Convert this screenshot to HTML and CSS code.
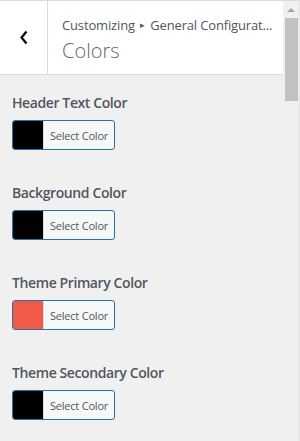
FILE: index.html
```
<!DOCTYPE html>
<html lang="en">
<head>
    <meta charset="UTF-8">
    <meta name="viewport" content="width=device-width, initial-scale=1.0">
    <title>Customizing Colors</title>

    <link rel="stylesheet" href="styles.css">
</head>
<body>
    <div class="panel">
        <div class="main">
            <div class="section-head">
                <button class="back-button" aria-label="Back">
                    <svg width="10" height="15" viewBox="0 0 10 15"><path d="M7.5 1.5 L2.5 7.5 L7.5 13.5" fill="none" stroke="#000" stroke-width="2.2"/></svg>
                </button>
                <div class="titles">
                    <span class="crumb">Customizing <span class="arrow">&#9656;</span> General Configurat...</span>
                    <h2 class="section-title">Colors</h2>
                </div>
            </div>

            <ul class="controls">
                <li class="control">
                    <span class="control-label">Header Text Color</span>
                    <button class="color-button"><span class="swatch" style="background-color: #000000"></span><span class="button-text">Select Color</span></button>
                </li>
                <li class="control">
                    <span class="control-label">Background Color</span>
                    <button class="color-button"><span class="swatch" style="background-color: #000000"></span><span class="button-text">Select Color</span></button>
                </li>
                <li class="control">
                    <span class="control-label">Theme Primary Color</span>
                    <button class="color-button"><span class="swatch" style="background-color: #f15a47"></span><span class="button-text">Select Color</span></button>
                </li>
                <li class="control">
                    <span class="control-label">Theme Secondary Color</span>
                    <button class="color-button"><span class="swatch" style="background-color: #000000"></span><span class="button-text">Select Color</span></button>
                </li>
            </ul>
        </div>

        <div class="scrollbar">
            <div class="scroll-arrow"></div>
            <div class="scroll-thumb"></div>
        </div>
    </div>
</body>
</html>
```

FILE: styles.css
```
body{
    margin: 0;
    background-color: #f0f0f0;
    font-family: "Open Sans", Arial, sans-serif;
    color: #50575e;
    overflow: hidden;
}
.panel{
    display: flex;
    height: 441px;
    border-top: 1px solid #dcdcde;
    box-sizing: border-box;
}
.main{
    width: 283px;
    flex: none;
}
.section-head{
    display: flex;
    height: 73px;
    background: #fff;
    border-bottom: 1px solid #dcdcde;
}
.back-button{
    width: 48px;
    flex: none;
    border: none;
    border-right: 1px solid #dcdcde;
    background: transparent;
    padding: 0;
    display: flex;
    align-items: center;
    justify-content: center;
    cursor: pointer;
}
.titles{
    min-width: 0;
    padding: 14px 8px 0 14px;
    display: flex;
    flex-direction: column;
}
.crumb{
    font-size: 13px;
    line-height: 20px;
    letter-spacing: -0.15px;
    color: #50575e;
    white-space: nowrap;
}
.arrow{
    font-size: 9px;
    vertical-align: 2px;
    margin: 0 2px;
}
.section-title{
    margin: 2px 0 0;
    font-size: 20px;
    font-weight: 300;
    line-height: 28px;
    color: #646970;
}
.controls{
    list-style: none;
    margin: 0;
    padding: 18px 12px 0;
}
.control{
    display: flex;
    flex-direction: column;
    align-items: flex-start;
    height: 90px;
}
.control-label{
    font-size: 14px;
    font-weight: 600;
    line-height: 20px;
    letter-spacing: -0.4px;
    color: #50575e;
    margin-bottom: 7px;
}
.color-button{
    display: flex;
    width: 103px;
    height: 30px;
    padding: 0;
    border: 1px solid #2271b1;
    border-radius: 3px;
    background: #f6f7f7;
    overflow: hidden;
    cursor: pointer;
    font-family: inherit;
}
.swatch{
    width: 30px;
    height: 100%;
    border-right: 1px solid #dcdcde;
}
.button-text{
    flex: 1;
    align-self: center;
    font-size: 11px;
    letter-spacing: -0.2px;
    color: #50575e;
    text-align: center;
}
.scrollbar{
    width: 17px;
    flex: none;
    background: #f0f0f0;
    border-right: 1px solid #e2e2e2;
    box-sizing: border-box;
    display: flex;
    flex-direction: column;
    align-items: center;
}
.scroll-arrow{
    margin-top: 7px;
    width: 0;
    height: 0;
    border-left: 4px solid transparent;
    border-right: 4px solid transparent;
    border-bottom: 4px solid #a3a3a3;
}
.scroll-thumb{
    margin-top: 6px;
    width: 13px;
    height: 83px;
    background: #c1c1c1;
}
```
